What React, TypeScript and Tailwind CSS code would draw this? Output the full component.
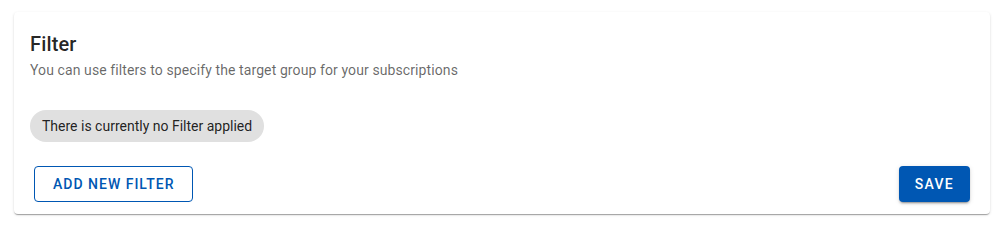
export default function App() {
  return (
    <div className="min-h-[227px] bg-white pt-3 pl-[14px] pr-[15px] font-['Roboto','Liberation_Sans',sans-serif]">
      <div className="rounded bg-white shadow-[0px_2px_1px_-1px_rgba(0,0,0,0.2),0px_1px_1px_0px_rgba(0,0,0,0.14),0px_1px_3px_0px_rgba(0,0,0,0.12)]">
        <div className="px-4 pt-4">
          <h2 className="text-[20px] font-medium leading-8 tracking-[0.15px] text-black/[0.87]">Filter</h2>
          <p className="text-[14px] leading-5 tracking-[0.1px] text-black/60">
            You can use filters to specify the target group for your subscriptions
          </p>
          <div className="mt-[30px] flex">
            <span className="inline-flex h-8 items-center rounded-full bg-[#e0e0e0] px-3 text-[14px] text-black/[0.87]">
              There is currently no Filter applied
            </span>
          </div>
        </div>
        <div className="flex items-center justify-between px-5 pt-6 pb-3">
          <button className="h-9 rounded border border-[#0057b3] px-[18px] text-[14px] font-medium uppercase tracking-[1px] text-[#0057b3]">
            Add new filter
          </button>
          <button className="h-9 rounded bg-[#0057b3] px-4 text-[14px] font-medium uppercase tracking-[1.25px] text-white shadow-[0px_3px_1px_-2px_rgba(0,0,0,0.2),0px_2px_2px_0px_rgba(0,0,0,0.14),0px_1px_5px_0px_rgba(0,0,0,0.12)]">
            Save
          </button>
        </div>
      </div>
    </div>
  )
}
